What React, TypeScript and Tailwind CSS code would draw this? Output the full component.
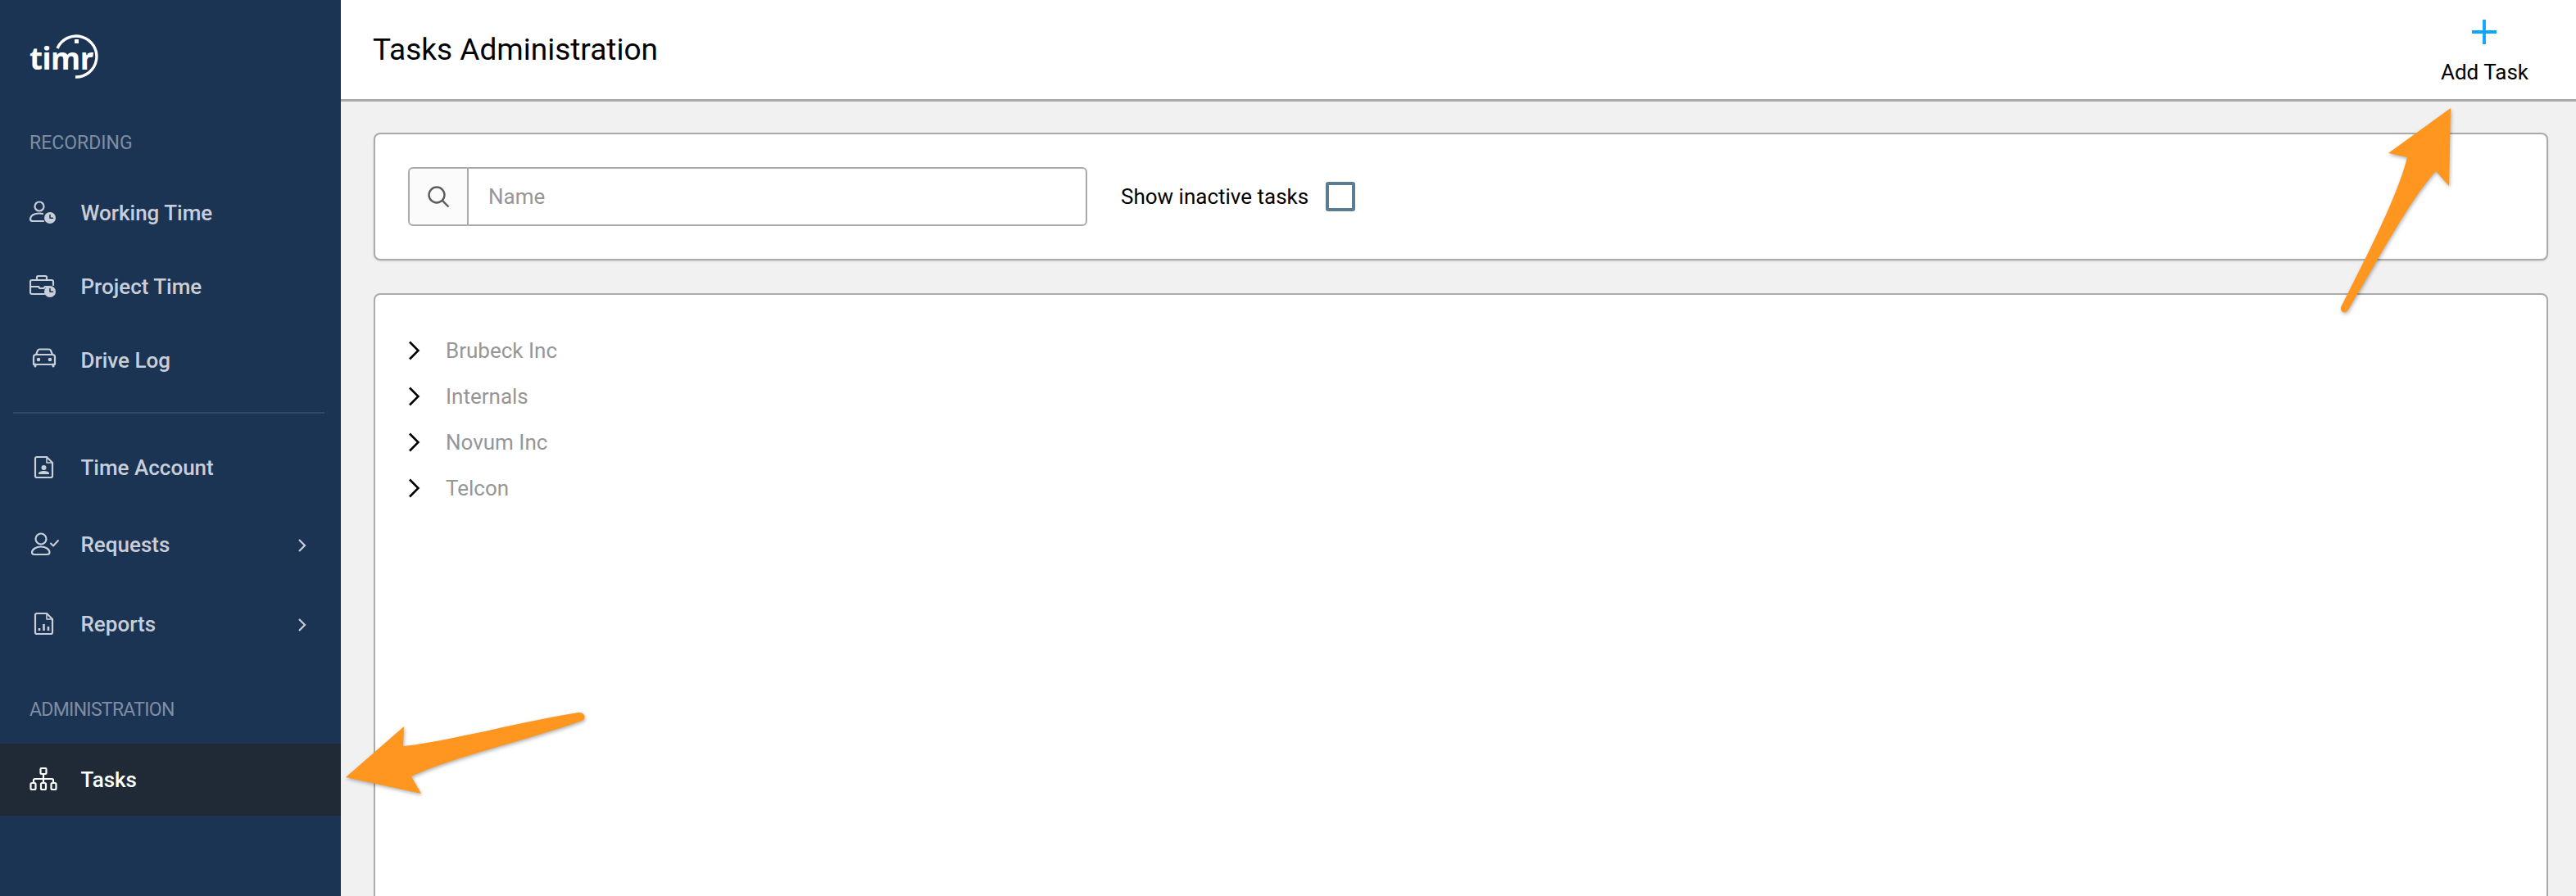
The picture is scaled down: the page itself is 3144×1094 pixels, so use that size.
import type { ReactNode } from "react";

const Icon = ({ children }: { children: ReactNode }) => (
  <svg width="36" height="36" viewBox="0 0 36 36" fill="none" stroke="currentColor" strokeWidth="2.2" strokeLinecap="round" strokeLinejoin="round">
    {children}
  </svg>
);

const ClockBadge = ({ x, y }: { x: number; y: number }) => (
  <>
    <circle cx={x} cy={y} r="7" fill="currentColor" stroke="none" />
    <path d={`M${x} ${y - 3.5}v3.8h3.5`} stroke="#1b3453" strokeWidth="1.6" />
  </>
);

const WorkingTimeIcon = () => (
  <Icon>
    <circle cx="12" cy="10" r="5.5" />
    <path d="M17 28H4c-2 0-3-1-3-2.5C1 21 6 18.5 12 18.500c1.500 0 3 .2 4 .5" />
    <ClockBadge x={25} y={24} />
  </Icon>
);

const ProjectTimeIcon = () => (
  <Icon>
    <path d="M9 10V6.500c0-1 .8-1.500 1.500-1.500h9c.8 0 1.500.5 1.500 1.500V10" />
    <path d="M18 27H3c-1 0-2-.8-2-2V12c0-1.200 1-2 2-2h24c1 0 2 .8 2 2v4" />
    <path d="M1 18h10l1.500 2h5l1.500-2h4" />
    <ClockBadge x={25} y={24} />
  </Icon>
);

const CarIcon = () => (
  <Icon>
    <path d="M8 11l2-5c.4-1 1.200-1.500 2.200-1.500h11.600c1 0 1.800.5 2.200 1.500l2 5" />
    <path d="M5 23v-9c0-2 1.500-3 3-3h20c1.500 0 3 1 3 3v9z" />
    <path d="M7 23v2M29 23v2" strokeWidth="3" />
    <circle cx="11" cy="17" r="1.200" fill="currentColor" />
    <circle cx="25" cy="17" r="1.200" fill="currentColor" />
  </Icon>
);

const Doc = ({ children }: { children: ReactNode }) => (
  <Icon>
    <path d="M9 4h12l7 7v16c0 1-.8 2-2 2H9c-1 0-2-1-2-2V6c0-1 1-2 2-2z" />
    <path d="M21 4v7h7" strokeWidth="1.600" />
    {children}
  </Icon>
);

const RequestsIcon = () => (
  <Icon>
    <circle cx="14" cy="10" r="6.500" />
    <path d="M6 29h15c2 0 3.500-1 3.500-2.500 0-4-5-7-10.500-7s-11 3-11 7C3 28 4 29 6 29z" />
    <path d="M26 15.500l3 3 6-6.500" strokeWidth="2" />
  </Icon>
);

const TasksIcon = () => (
  <svg width="36" height="36" viewBox="0 0 36 36" fill="none" stroke="currentColor" strokeWidth="2.2">
    <rect x="13.500" y="4" width="7" height="7" rx="1" />
    <path d="M17 11v10M5 21v-2.500c0-1 .5-1.500 1.500-1.500h21c1 0 1.500.5 1.500 1.500V21" />
    <rect x="1.500" y="22" width="6" height="8" rx="1.500" />
    <rect x="14" y="22" width="6" height="8" rx="1.500" />
    <rect x="26.500" y="22" width="6" height="8" rx="1.500" />
  </svg>
);

const Chevron = () => (
  <svg width="12" height="18" viewBox="0 0 12 18" fill="none" stroke="currentColor" strokeWidth="2.200" className="ml-auto">
    <path d="M2 2l7 7-7 7" />
  </svg>
);

function NavRow({ label, icon, height, chevron, active }: { label: string; icon: ReactNode; height: string; chevron?: boolean; active?: boolean }) {
  return (
    <div className={`flex items-center pl-[36px] pr-[41px] gap-[27px] text-[26px] font-medium ${height} ${active ? "bg-[#1f2a36] text-white" : "text-[#c8cfd9]"}`}>
      {icon}
      <span className="-ml-[0.5px]">{label}</span>
      {chevron && <Chevron />}
    </div>
  );
}

function Logo() {
  return (
    <div className="relative w-[90px] h-[56px] ml-[36px] mt-[40px] text-white">
      <span className="absolute left-0 top-[3px] text-[37px] leading-[56px] font-bold tracking-[-0.5px] font-['Noto_Sans',sans-serif]">timr</span>
      <svg width="90" height="56" viewBox="0 0 90 56" fill="none" stroke="white" strokeWidth="3.400" className="absolute left-0 top-0">
        <path d="M34 19A25 25 0 1 1 56 54" />
        <rect x="55" y="8" width="5" height="5" fill="white" stroke="none" />
        <rect x="71" y="25" width="5" height="5" fill="white" stroke="none" />
      </svg>
    </div>
  );
}

function Sidebar() {
  return (
    <aside className="w-[416px] shrink-0 h-full bg-[#1b3453] flex flex-col">
      <Logo />
      <div className="pl-[36px] mt-[65px] h-[28px] text-[23px] leading-[28px] text-[#7f8ea3]">RECORDING</div>
      <div className="mt-[26px]">
        <NavRow label="Working Time" height="h-[90px]" icon={<WorkingTimeIcon />} />
        <NavRow label="Project Time" height="h-[90px]" icon={<ProjectTimeIcon />} />
        <NavRow label="Drive Log" height="h-[90px]" icon={<CarIcon />} />
      </div>
      <div className="mx-[16px] mt-[18px] w-[380px] h-[2px] bg-[#30496a]" />
      <div className="mt-[21px]">
        <NavRow
          label="Time Account"
          height="h-[91px]"
          icon={
            <Doc>
              <circle cx="17.500" cy="17" r="3" fill="currentColor" stroke="none" />
              <path d="M11 25v-1c0-2 3-3 6.500-3s6.500 1 6.500 3v1z" fill="currentColor" stroke="none" />
            </Doc>
          }
        />
        <NavRow label="Requests" height="h-[97px]" icon={<RequestsIcon />} chevron />
        <NavRow
          label="Reports"
          height="h-[97px]"
          chevron
          icon={
            <Doc>
              <path d="M12 25v-3M17.500 25v-8M23 25v-5" strokeWidth="2.600" strokeLinecap="butt" />
            </Doc>
          }
        />
      </div>
      <div className="pl-[36px] mt-[42px] h-[28px] text-[23px] leading-[28px] tracking-[-0.7px] text-[#7f8ea3]">ADMINISTRATION</div>
      <div className="mt-[27px]">
        <NavRow label="Tasks" height="h-[88px]" icon={<TasksIcon />} active />
      </div>
    </aside>
  );
}

function Header() {
  return (
    <header className="h-[124px] shrink-0 bg-white border-b-[3px] border-[#aaaaaa] flex items-center justify-between pl-[39px] pr-[58px]">
      <h1 className="text-[37px] text-black font-normal">Tasks Administration</h1>
      <div className="flex flex-col items-center pt-[5px]">
        <svg width="32" height="32" viewBox="0 0 32 32" stroke="#0ea5fb" strokeWidth="3.800">
          <path d="M16 1v30M1 16h30" />
        </svg>
        <span className="text-[26px] leading-[30px] mt-[18px] text-black">Add Task</span>
      </div>
    </header>
  );
}

function SearchBox() {
  return (
    <div className="flex w-[829px] h-[72px] rounded-[6px] border-[2px] border-[#aaaaaa] bg-white">
      <div className="w-[72px] flex items-center justify-center bg-[#fbfbfb] border-r-[2px] border-[#aaaaaa] rounded-l-[6px]">
        <svg width="28" height="28" viewBox="0 0 28 28" fill="none" stroke="#5c5c5c" strokeWidth="2.400">
          <circle cx="12" cy="12" r="9.500" />
          <path d="M19 19l7.500 7.500" />
        </svg>
      </div>
      <div className="flex items-center pl-[24px] text-[26px] text-[#969696]">Name</div>
    </div>
  );
}

const clients = ["Brubeck Inc", "Internals", "Novum Inc", "Telcon"];

function Arrows() {
  return (
    <svg width="3144" height="1094" viewBox="0 0 3144 1094" className="absolute inset-0 pointer-events-none drop-shadow-[1px_2px_2px_rgba(0,0,0,0.3)]">
      <path
        d="M2991 132L2915 187L2938 192C2928 235 2890 310 2857 375C2856 382 2864 383 2866 378C2900 322 2940 245 2973 209L2989 227Z"
        fill="#ff961f"
        strokeLinejoin="round"
      />
      <path
        d="M422 949L493 887L492 911C540 907 640 880 706 870C714 869 716 878 710 880C640 905 550 925 502 948L514 969Z"
        fill="#ff961f"
      />
    </svg>
  );
}

export default function App() {
  return (
    <div className="relative w-[3144px] h-[1094px] overflow-hidden flex bg-[#f1f1f1] font-['Roboto',sans-serif]">
      <Sidebar />
      <div className="flex-1 flex flex-col min-w-0">
        <Header />
        <main className="flex-1 overflow-hidden pl-[40px] pr-[34px] pt-[38px]">
          <section className="h-[156px] rounded-[8px] border-[2px] border-[#aaaaaa] bg-white shadow-sm flex items-center pl-[40px]">
            <SearchBox />
            <span className="ml-[41px] text-[26px] text-black">Show inactive tasks</span>
            <div className="ml-[21px] w-[36px] h-[36px] rounded-[3px] border-[4px] border-[#5a7d8f] bg-white" />
          </section>
          <section className="mt-[40px] h-[900px] rounded-[8px] border-[2px] border-[#aaaaaa] bg-white pt-[40px] pl-[40px]">
            {clients.map((name) => (
              <div key={name} className="flex items-center h-[56px] gap-[31px] text-[26px] text-[#969696]">
                <svg width="15" height="24" viewBox="0 0 15 24" fill="none" stroke="#000" strokeWidth="2.600">
                  <path d="M2 1.500l10.500 10.500L2 22.500" />
                </svg>
                <span>{name}</span>
              </div>
            ))}
          </section>
        </main>
      </div>
      <Arrows />
    </div>
  );
}
